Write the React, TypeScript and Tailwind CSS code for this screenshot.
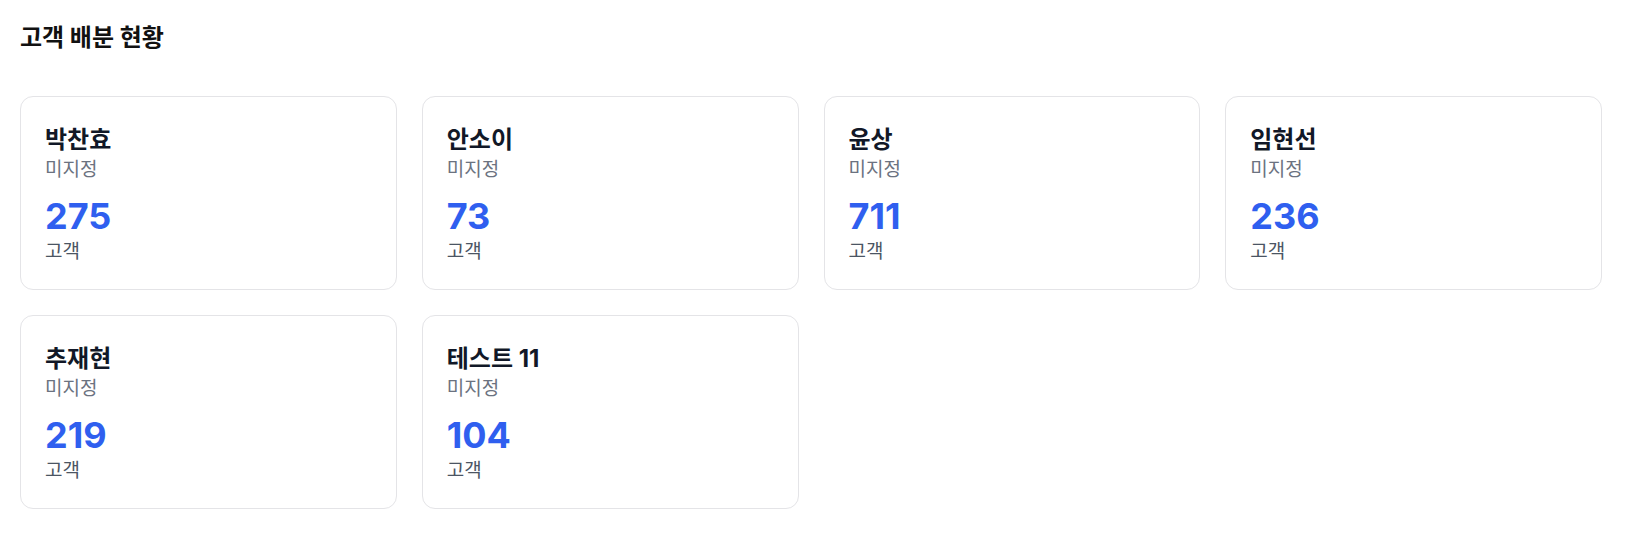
const managers = [
  { name: '박찬효', team: '미지정', count: 275 },
  { name: '안소이', team: '미지정', count: 73 },
  { name: '윤상', team: '미지정', count: 711 },
  { name: '임현선', team: '미지정', count: 236 },
  { name: '추재현', team: '미지정', count: 219 },
  { name: '테스트 11', team: '미지정', count: 104 },
]

function ManagerCard({ name, team, count }: { name: string; team: string; count: number }) {
  return (
    <div className="flex h-[194px] flex-col rounded-[13px] border border-[#e4e4e7] bg-white px-[24px] pt-[25px]">
      <h3 className="text-[24px] leading-[35px] font-bold text-[#111827]">{name}</h3>
      <p className="text-[19px] leading-[25px] text-[#6b7280]">{team}</p>
      <p className="mt-[12px] text-[36px] leading-[45px] font-bold text-[#2f5fef]">{count}</p>
      <p className="text-[19px] leading-[25px] text-[#4b5563]">고객</p>
    </div>
  )
}

export default function App() {
  return (
    <div
      className="min-h-screen bg-white pt-5 pr-[27px] pb-6 pl-5"
      style={{ fontFamily: 'Inter, "Noto Sans CJK KR", sans-serif' }}
    >
      <h2 className="text-[24px] leading-[35px] font-bold text-[#111111]">고객 배분 현황</h2>
      <div className="mt-[41px] grid grid-cols-4 gap-[25px]">
        {managers.map((m) => (
          <ManagerCard key={m.name} {...m} />
        ))}
      </div>
    </div>
  )
}
